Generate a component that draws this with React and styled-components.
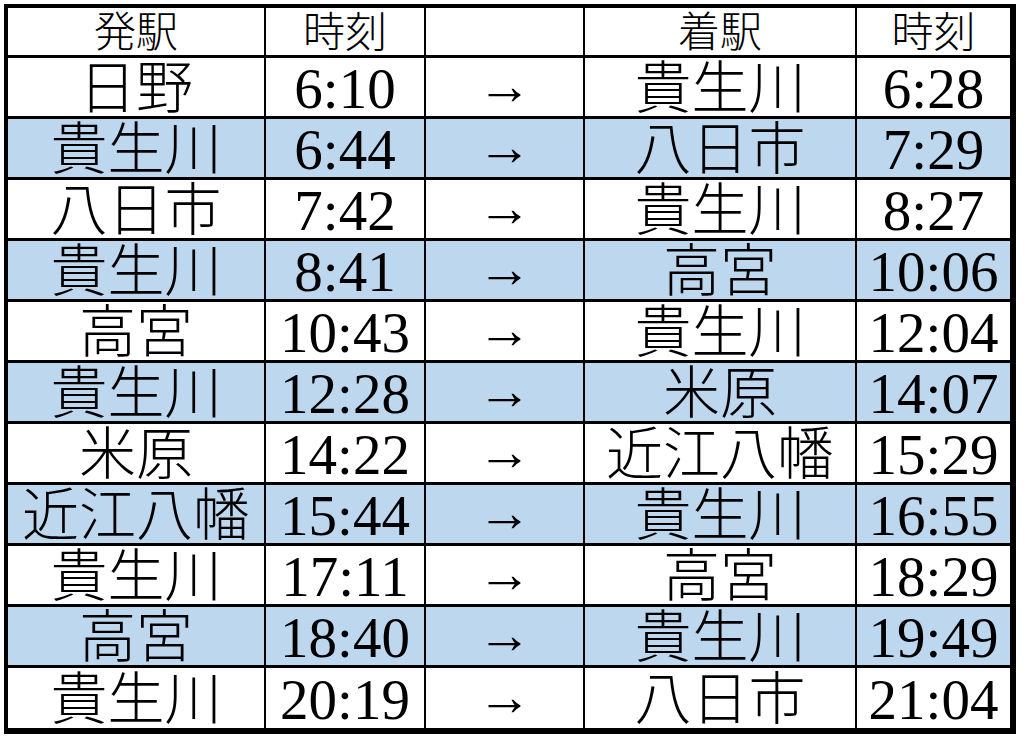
import React from "react";
import styled, { createGlobalStyle } from "styled-components";

const rows = [
  ["日野", "6:10", "貴生川", "6:28"],
  ["貴生川", "6:44", "八日市", "7:29"],
  ["八日市", "7:42", "貴生川", "8:27"],
  ["貴生川", "8:41", "高宮", "10:06"],
  ["高宮", "10:43", "貴生川", "12:04"],
  ["貴生川", "12:28", "米原", "14:07"],
  ["米原", "14:22", "近江八幡", "15:29"],
  ["近江八幡", "15:44", "貴生川", "16:55"],
  ["貴生川", "17:11", "高宮", "18:29"],
  ["高宮", "18:40", "貴生川", "19:49"],
  ["貴生川", "20:19", "八日市", "21:04"],
];

const GlobalStyle = createGlobalStyle`
  html, body {
    margin: 0;
    padding: 0;
    background: #fff;
  }
  body {
    padding: 4px;
    font-family: "Liberation Serif", "Noto Sans CJK JP", serif;
    color: #000;
  }
`;

const Timetable = () => {
  return (
    <>
      <GlobalStyle />
      <Grid>
        <HeadCell>発駅</HeadCell>
        <HeadCell>時刻</HeadCell>
        <HeadCell />
        <HeadCell>着駅</HeadCell>
        <HeadCell $last>時刻</HeadCell>
        {rows.map((row, i) => {
          const shade = i % 2 === 1;
          const end = i === rows.length - 1;
          return (
            <React.Fragment key={i}>
              <Cell $shade={shade} $end={end}>
                {row[0]}
              </Cell>
              <Cell $shade={shade} $end={end}>
                {row[1]}
              </Cell>
              <Cell $shade={shade} $end={end}>
                <Arrow>→</Arrow>
              </Cell>
              <Cell $shade={shade} $end={end}>
                {row[2]}
              </Cell>
              <Cell $shade={shade} $end={end} $last>
                {row[3]}
              </Cell>
            </React.Fragment>
          );
        })}
      </Grid>
    </>
  );
};

const Grid = styled.div`
  display: grid;
  grid-template-columns: 258px 160px 159px 272px 153px;
  grid-template-rows: 50px repeat(10, 61px) 60px;
  width: max-content;
  border-style: solid;
  border-color: #000;
  border-width: 4px 6px 6px 4px;
`;

const Cell = styled.div`
  box-sizing: border-box;
  display: flex;
  align-items: center;
  justify-content: center;
  background: ${(props) => (props.$shade ? "#bdd7ee" : "#fff")};
  border-right: ${(props) => (props.$last ? "none" : "2px solid #000")};
  border-bottom: ${(props) => (props.$end ? "none" : "3px solid #000")};
  font-size: 57px;
  font-weight: 300;
  line-height: 1;
  white-space: nowrap;
  padding-top: 2px;
`;

const HeadCell = styled(Cell)`
  font-size: 42px;
  padding-top: 2px;
`;

const Arrow = styled.span`
  font-size: 54px;
  padding-bottom: 4px;
`;

export default Timetable;
